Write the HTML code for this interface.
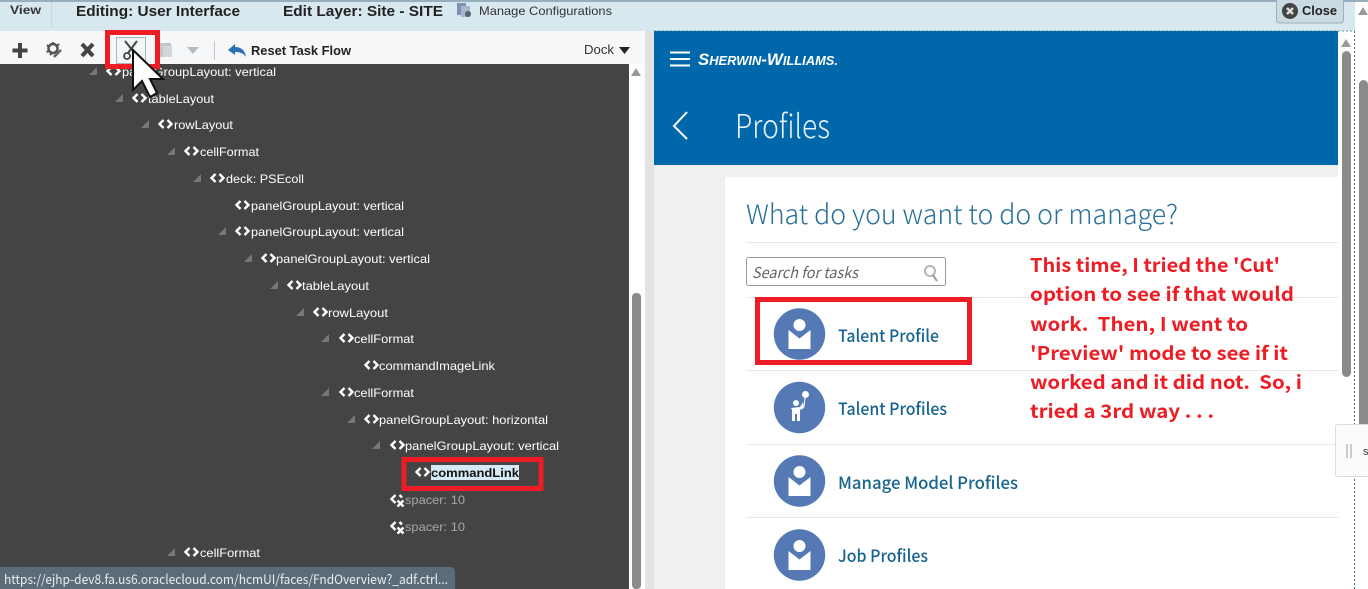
<!DOCTYPE html>
<html><head><meta charset="utf-8"><title>Profiles</title>
<style>
html,body{margin:0;padding:0;background:#fff;width:1368px;height:589px;overflow:hidden}
svg{display:block}
text{font-family:"Liberation Sans",Arial,sans-serif;white-space:pre}
.t{fill:#fff;font-size:12px}
.g{fill:#a8a8a8;font-size:12px}
.l{fill:#17648f;font-size:17px;font-weight:500;font-family:"Noto Sans CJK JP",sans-serif}
.r{fill:#ee1c25;font-size:19px;font-weight:bold;font-family:"Noto Sans CJK JP",sans-serif}
.n{font-family:"Noto Sans CJK JP",sans-serif;font-weight:300}
</style></head><body>
<svg width="1368" height="589" viewBox="0 0 1368 589" xmlns="http://www.w3.org/2000/svg">
<defs>
<g id="tri"><path d="M0 8L8 0V8Z" fill="#777"/></g>
<g id="code"><path d="M5.500 1L1.500 5L5.500 9M9.500 1L13.500 5L9.500 9" fill="none" stroke="#fff" stroke-width="2.400"/></g>
<g id="sp"><path d="M5.500 1L1.500 5L5.500 9M9.500 1L12 3.500" fill="none" stroke="#fff" stroke-width="2.400"/><path d="M7.500 6.500L13.500 12.500M13.500 6.500L7.500 12.500" stroke="#fff" stroke-width="2.400"/></g>
<g id="pers"><circle r="25.700" fill="#5479b5"/><circle cy="-9" r="6" fill="#fff"/><path d="M-11 -4L0 4.500L11 -4V15H-11Z" fill="#fff"/></g>
</defs>
<rect width="1368" height="589" fill="#fff"/>
<!-- top bar -->
<rect width="1355" height="31" fill="#d8e8ef"/>
<rect width="1368" height="2" fill="#97aebd"/>
<rect x="51" y="2" width="1" height="27" fill="#c6d7df"/>
<text x="10" y="14" font-size="12" font-weight="bold" fill="#333" textLength="31" lengthAdjust="spacingAndGlyphs">View</text>
<text x="76" y="16" font-size="14.500" font-weight="bold" fill="#222" textLength="164" lengthAdjust="spacingAndGlyphs">Editing: User Interface</text>
<text x="283" y="16" font-size="14.500" font-weight="bold" fill="#222" textLength="160" lengthAdjust="spacingAndGlyphs">Edit Layer: Site - SITE</text>
<rect x="457" y="3" width="9" height="12" fill="#7d93b5"/><rect x="461" y="6" width="9" height="11" fill="#a9b7c9"/><circle cx="468" cy="14" r="3" fill="#59636f"/>
<text x="479" y="15" font-size="12" fill="#333" textLength="133" lengthAdjust="spacingAndGlyphs">Manage Configurations</text>
<!-- close -->
<rect x="1276.500" y="-3" width="67" height="26" rx="3" fill="#cbdbe3" stroke="#9eafba"/>
<circle cx="1290" cy="11" r="8" fill="#444"/><path d="M1287 8L1293 14M1293 8L1287 14" stroke="#ddd" stroke-width="2.500"/>
<text x="1302" y="15" font-size="12.500" font-weight="bold" fill="#222" textLength="35" lengthAdjust="spacingAndGlyphs">Close</text>
<path d="M1358 15L1363 7L1368 15Z" fill="#999"/>
<!-- toolbar -->
<rect y="31" width="654" height="33" fill="#f5f7f8"/>
<path d="M20 43V58M12.500 50.500H27.500" stroke="#444" stroke-width="4"/>
<circle cx="53" cy="48.500" r="4.500" fill="none" stroke="#555" stroke-width="2.500"/><path d="M53 42V44M47 45L49 47M59 44L57 46M46.500 52L49 51M50 55L52 53" stroke="#555" stroke-width="2"/><path d="M54 57L61 50" stroke="#666" stroke-width="2.500"/>
<path d="M82 44L93 56M93 44L82 56" stroke="#444" stroke-width="4"/>
<rect x="116.500" y="37.500" width="29" height="26" fill="#f3f6f7" stroke="#a6b4bd"/>
<path d="M125 41L136 55M137 41L128 53" stroke="#444" stroke-width="2" fill="none"/><circle cx="127" cy="56" r="3" fill="none" stroke="#444" stroke-width="1.800"/>
<rect x="159" y="43" width="12" height="14" fill="#c2c6c8"/><rect x="163" y="46" width="9" height="11" fill="#d4d7d9"/>
<path d="M187 47H199L193 54Z" fill="#b6bbbf"/>
<rect x="214" y="41" width="1" height="19" fill="#c3c7ca"/>
<path d="M228 50L235 44V47C241 47 245 50 246 57C243 53 240 52 235 52V55Z" fill="#2a6fb5"/>
<text x="251" y="55" font-size="12.500" font-weight="bold" fill="#222" textLength="100" lengthAdjust="spacingAndGlyphs">Reset Task Flow</text>
<text x="584" y="54" font-size="12.500" fill="#333" textLength="30" lengthAdjust="spacingAndGlyphs">Dock</text>
<path d="M619 47H630L624.500 54Z" fill="#222"/>
<!-- tree -->
<rect y="64" width="629" height="525" fill="#444"/>
<rect x="629" y="64" width="14" height="525" fill="#fff"/>
<path d="M631 76L636 68L641 76Z" fill="#999"/>
<rect x="632" y="293" width="9" height="296" rx="4" fill="#8a8a8a"/>
<rect x="643" y="31" width="11" height="558" fill="#e3e3e3"/>
<rect x="643" y="31" width="2" height="558" fill="#fff"/>
<use href="#tri" x="89" y="67"/><use href="#code" x="106" y="66"/><text class="t" x="122" y="76" textLength="154" lengthAdjust="spacingAndGlyphs">panelGroupLayout: vertical</text>
<use href="#tri" x="115" y="94"/><use href="#code" x="132" y="93"/><text class="t" x="148" y="103" textLength="66" lengthAdjust="spacingAndGlyphs">tableLayout</text>
<use href="#tri" x="141" y="120"/><use href="#code" x="158" y="119"/><text class="t" x="174" y="129" textLength="59" lengthAdjust="spacingAndGlyphs">rowLayout</text>
<use href="#tri" x="167" y="147"/><use href="#code" x="184" y="146"/><text class="t" x="200" y="156" textLength="59" lengthAdjust="spacingAndGlyphs">cellFormat</text>
<use href="#tri" x="193" y="174"/><use href="#code" x="210" y="173"/><text class="t" x="226" y="183" textLength="78" lengthAdjust="spacingAndGlyphs">deck: PSEcoll</text>
<use href="#code" x="235" y="200"/><text class="t" x="251" y="210" textLength="153" lengthAdjust="spacingAndGlyphs">panelGroupLayout: vertical</text>
<use href="#tri" x="218" y="227"/><use href="#code" x="235" y="226"/><text class="t" x="251" y="236" textLength="153" lengthAdjust="spacingAndGlyphs">panelGroupLayout: vertical</text>
<use href="#tri" x="244" y="254"/><use href="#code" x="261" y="253"/><text class="t" x="276" y="263" textLength="154" lengthAdjust="spacingAndGlyphs">panelGroupLayout: vertical</text>
<use href="#tri" x="270" y="281"/><use href="#code" x="287" y="280"/><text class="t" x="302" y="290" textLength="67" lengthAdjust="spacingAndGlyphs">tableLayout</text>
<use href="#tri" x="296" y="308"/><use href="#code" x="313" y="307"/><text class="t" x="328" y="317" textLength="60" lengthAdjust="spacingAndGlyphs">rowLayout</text>
<use href="#tri" x="321" y="334"/><use href="#code" x="339" y="333"/><text class="t" x="354" y="343" textLength="60" lengthAdjust="spacingAndGlyphs">cellFormat</text>
<use href="#code" x="364" y="360"/><text class="t" x="379" y="370" textLength="116" lengthAdjust="spacingAndGlyphs">commandImageLink</text>
<use href="#tri" x="321" y="388"/><use href="#code" x="339" y="387"/><text class="t" x="354" y="397" textLength="60" lengthAdjust="spacingAndGlyphs">cellFormat</text>
<use href="#tri" x="347" y="415"/><use href="#code" x="364" y="414"/><text class="t" x="379" y="424" textLength="169" lengthAdjust="spacingAndGlyphs">panelGroupLayout: horizontal</text>
<use href="#tri" x="372" y="441"/><use href="#code" x="390" y="440"/><text class="t" x="405" y="450" textLength="154" lengthAdjust="spacingAndGlyphs">panelGroupLayout: vertical</text>
<use href="#code" x="415" y="467"/>
<rect x="431" y="465" width="88" height="15" fill="#d5e9f6"/><text x="431" y="477" font-size="12" font-weight="bold" fill="#111" textLength="88" lengthAdjust="spacingAndGlyphs">commandLink</text>
<use href="#sp" x="390" y="494"/><text class="g" x="405" y="504" textLength="60" lengthAdjust="spacingAndGlyphs">spacer: 10</text>
<use href="#sp" x="390" y="521"/><text class="g" x="405" y="531" textLength="60" lengthAdjust="spacingAndGlyphs">spacer: 10</text>
<use href="#tri" x="167" y="548"/><use href="#code" x="184" y="547"/><text class="t" x="200" y="557" textLength="60" lengthAdjust="spacingAndGlyphs">cellFormat</text>
<!-- status -->
<path d="M0 567H450Q455 567 455 572V589H0Z" fill="#5b6b78"/>
<text x="4" y="584" font-size="13" fill="#e8eef2" style="font-family:'Noto Sans CJK JP',sans-serif" textLength="444" lengthAdjust="spacingAndGlyphs">https://ejhp-dev8.fa.us6.oraclecloud.com/hcmUI/faces/FndOverview?_adf.ctrl...</text>
<!-- right pane -->
<rect x="654" y="31" width="684" height="558" fill="#f0f0f0"/>
<rect x="654" y="31" width="684" height="134" fill="#0067ab"/>
<rect x="725" y="177" width="613" height="412" fill="#fff"/>
<path d="M670 52.500H690M670 59H690M670 65.500H690" stroke="#fff" stroke-width="2"/>
<text x="698" y="65" font-size="17" font-weight="bold" font-style="italic" fill="#fff" textLength="140" lengthAdjust="spacingAndGlyphs">S<tspan font-size="13">HERWIN</tspan>-W<tspan font-size="13">ILLIAMS.</tspan></text>
<path d="M687 112L674 126L687 139" fill="none" stroke="#fff" stroke-width="2"/>
<text class="n" x="735" y="138" font-size="33" fill="#e8f1f7" textLength="95" lengthAdjust="spacingAndGlyphs">Profiles</text>
<text class="n" x="746" y="224" font-size="27" fill="#2a7099" textLength="432" lengthAdjust="spacingAndGlyphs">What do you want to do or manage?</text>
<path d="M746 242.500H1338M746 297.500H1338M746 370.500H1338M746 444.500H1338M746 517.500H1338" stroke="#e9e9e9"/>
<rect x="746.500" y="257.500" width="199" height="28" rx="2" fill="#fff" stroke="#9a9a9a"/>
<text x="752" y="278" font-size="15" font-style="italic" fill="#666" style="font-family:'Noto Sans CJK JP',sans-serif" textLength="106" lengthAdjust="spacingAndGlyphs">Search for tasks</text>
<circle cx="930" cy="271" r="5" fill="none" stroke="#b5b5b5" stroke-width="2"/><path d="M933 275L937 281" stroke="#999" stroke-width="2"/>
<!-- list -->
<use href="#pers" x="799.500" y="334"/>
<text class="l" x="838" y="342" textLength="101" lengthAdjust="spacingAndGlyphs">Talent Profile</text>
<circle cx="799.500" cy="407.500" r="25.700" fill="#5479b5"/>
<circle cx="805.500" cy="394.500" r="3.500" fill="#fff"/><circle cx="796" cy="403" r="3" fill="#fff"/><path d="M791 408L800 407L803 402L804 408L800 410V421H797V414H795V421H792V410Z" fill="#fff"/><path d="M805 398L804 407" stroke="#fff"/>
<text class="l" x="838" y="415" textLength="109" lengthAdjust="spacingAndGlyphs">Talent Profiles</text>
<use href="#pers" x="799.500" y="481"/>
<text class="l" x="838" y="489" textLength="180" lengthAdjust="spacingAndGlyphs">Manage Model Profiles</text>
<use href="#pers" x="799.500" y="555"/>
<text class="l" x="838" y="562" textLength="90" lengthAdjust="spacingAndGlyphs">Job Profiles</text>
<!-- annotation -->
<text class="r" x="1030" y="272" textLength="250" lengthAdjust="spacingAndGlyphs">This time, I tried the 'Cut'</text>
<text class="r" x="1030" y="301" textLength="264" lengthAdjust="spacingAndGlyphs">option to see if that would</text>
<text class="r" x="1030" y="331" textLength="218" lengthAdjust="spacingAndGlyphs">work.  Then, I went to</text>
<text class="r" x="1030" y="360" textLength="258" lengthAdjust="spacingAndGlyphs">'Preview' mode to see if it</text>
<text class="r" x="1030" y="389" textLength="272" lengthAdjust="spacingAndGlyphs">worked and it did not.  So, i</text>
<text class="r" x="1030" y="418" textLength="184" lengthAdjust="spacingAndGlyphs">tried a 3rd way . . .</text>
<!-- red boxes -->
<rect x="107.500" y="32.500" width="50" height="34" fill="none" stroke="#ee1c25" stroke-width="5"/>
<rect x="757.500" y="299.500" width="212" height="63" fill="none" stroke="#ee1c25" stroke-width="5"/>
<rect x="404" y="459.500" width="137" height="29" fill="none" stroke="#ee1c25" stroke-width="5"/>
<!-- cursor -->
<path d="M133 50V90L142 81L150 97L157 93L150 79L163 79Z" fill="#fff" stroke="#111" stroke-width="2"/>
<!-- right scrollbars -->
<rect x="1338" y="31" width="16" height="558" fill="#fff"/>
<path d="M1341 47L1346 39L1351 47Z" fill="#999"/>
<rect x="1342" y="51" width="9" height="326" rx="4.500" fill="#8a8a8a"/>
<path d="M1354.500 31V589" stroke="#2f6f8a" stroke-dasharray="2 2"/>
<path d="M654 31H1354" stroke="#2f6f8a" stroke-dasharray="2 2" opacity=".7"/>
<rect x="1359" y="80" width="9" height="350" rx="4.500" fill="#8a8a8a"/>
<rect x="1335.500" y="424.500" width="40" height="52" rx="2" fill="#fbfbfb" stroke="#dcdcdc"/>
<path d="M1347 444V458M1351 444V458" stroke="#ccc" stroke-width="2"/>
<text x="1363" y="455" font-size="11" fill="#333">s</text>
</svg>
</body></html>
